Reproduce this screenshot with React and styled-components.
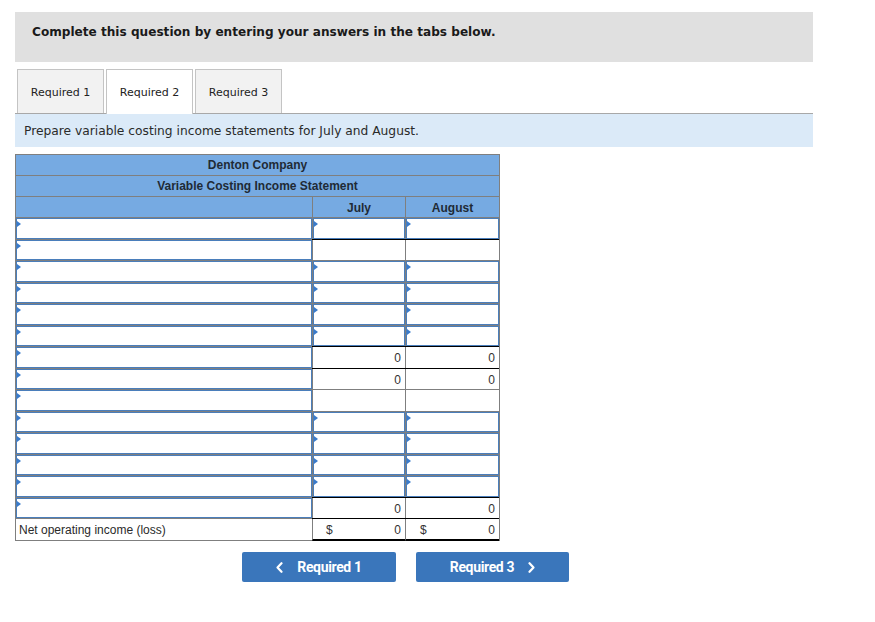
import React from "react";
import styled, { createGlobalStyle, css } from "styled-components";

const Global = createGlobalStyle`
  html, body { margin: 0; padding: 0; background: #fff; }
  * { box-sizing: border-box; }
`;

const Page = styled.div`
  padding: 12px 0 0 15px;
  width: 813px;
  font-family: "DejaVu Sans", Verdana, sans-serif;
  color: #222;
`;

const Instruction = styled.div`
  height: 50px;
  background: #e0e0e0;
  padding: 12px 17px;
  font-size: 12.1px;
  line-height: 17px;
  font-weight: bold;
  color: #1a1a1a;
`;

const TabBar = styled.div`
  display: flex;
  gap: 2px;
  margin-top: 7px;
  padding-left: 2px;
  border-bottom: 1px solid #a8a8a8;
  width: 798px;
`;

const Tab = styled.div`
  width: 87px;
  display: flex;
  align-items: center;
  justify-content: center;
  padding-top: 1px;
  font-size: 11px;
  color: #222;
  border: 1px solid #c4c4c4;
  border-bottom: none;
  background: ${(p) => (p.$active ? "#fff" : "#f2f2f2")};
  margin-bottom: ${(p) => (p.$active ? "-1px" : "0")};
  height: ${(p) => (p.$active ? "45px" : "44px")};
`;

const InfoBand = styled.div`
  width: 798px;
  height: 33px;
  background: #dbeaf8;
  padding-left: 9px;
  display: flex;
  align-items: center;
  font-size: 12.25px;
  color: #2a2a2a;
`;

const Sheet = styled.div`
  margin-top: 7px;
  width: 485px;
  border: 1px solid #7f7f7f;
  border-bottom: none;
  font-family: "Liberation Sans", Arial, sans-serif;
  font-size: 12px;
`;

const TitleRow = styled.div`
  height: 21px;
  background: #76aae2;
  border-bottom: 1px solid #7f7f7f;
  display: flex;
  align-items: center;
  justify-content: center;
  font-weight: bold;
  color: #1f2a36;
`;

const Row = styled.div`
  display: flex;
  height: ${(p) => p.$h}px;
`;

const colWidth = { label: 296, july: 93, aug: 94 };

const Cell = styled.div`
  position: relative;
  width: ${(p) => colWidth[p.$col]}px;
  height: 100%;
  border-bottom: 1px solid #7f7f7f;
  ${(p) => p.$col !== "label" && css`border-left: 1px solid #7f7f7f;`}
  background: ${(p) => (p.$head ? "#76aae2" : "#fff")};
  display: flex;
  align-items: center;
  ${(p) =>
    p.$topRule &&
    css`
      &::before {
        content: "";
        position: absolute;
        left: -1px;
        right: 0;
        top: -1px;
        height: 1px;
        background: #000;
      }
    `}
  ${(p) =>
    p.$total &&
    css`
      border-bottom: 2px solid #000;
    `}
`;

const HeadText = styled.span`
  flex: 1;
  text-align: center;
  padding-top: 1px;
  font-weight: bold;
  color: #1f2a36;
`;

const InputWrap = styled.div`
  position: relative;
  width: 100%;
  height: 100%;
  &::before {
    content: "";
    position: absolute;
    left: 1px;
    top: 3px;
    width: 0;
    height: 0;
    border-top: 3px solid transparent;
    border-bottom: 3px solid transparent;
    border-left: 4px solid #3a7bcb;
  }
`;

const Field = styled.input`
  display: block;
  width: 100%;
  height: 100%;
  margin: 0;
  padding: 0 4px;
  border: 1px solid #4a7ebb;
  background: #fff;
  font: inherit;
  outline: none;
`;

const Amount = styled.span`
  flex: 1;
  display: flex;
  justify-content: space-between;
  padding: 1px 4px 0 ${(p) => (p.$col === "aug" ? "14px" : "13px")};
  color: #333;
`;

const Label = styled.span`
  padding: 1px 0 0 3px;
  color: #2a2a2a;
`;

const Nav = styled.div`
  display: flex;
  gap: 20px;
  margin-top: 11px;
  padding-left: 227px;
`;

const NavButton = styled.button`
  width: ${(p) => p.$w}px;
  height: 30px;
  border: none;
  border-radius: 2px;
  background: #3a76bb;
  color: #fff;
  font-family: Roboto, "Liberation Sans", sans-serif;
  font-weight: bold;
  font-size: 14px;
  letter-spacing: -0.35px;
  display: flex;
  align-items: center;
  justify-content: center;
  gap: 14px;
  padding: 0;
  cursor: pointer;
`;

const Chevron = ({ dir }) => (
  <svg width="7" height="11" viewBox="0 0 7 11" aria-hidden="true">
    <path
      d={dir === "left" ? "M5.5 1.2 L1.5 5.5 L5.5 9.8" : "M1.5 1.2 L5.5 5.5 L1.5 9.8"}
      fill="none"
      stroke="#fff"
      strokeWidth="2.2"
      strokeLinecap="round"
      strokeLinejoin="round"
    />
  </svg>
);

const Input = () => (
  <InputWrap>
    <Field type="text" />
  </InputWrap>
);

// row kinds: "in" = all inputs, "blank" = value cells empty, "zero" = zeros, "net" = totals
const rows = [
  { kind: "in" },
  { kind: "blank", rule: true },
  { kind: "in" },
  { kind: "in" },
  { kind: "in" },
  { kind: "in" },
  { kind: "zero", rule: true },
  { kind: "zero", rule: true },
  { kind: "blank" },
  { kind: "in" },
  { kind: "in" },
  { kind: "in" },
  { kind: "in" },
  { kind: "zero", rule: true },
  { kind: "net", rule: true },
];

const ValueCell = ({ col, row }) => {
  const { kind, rule } = row;
  return (
    <Cell $col={col} $topRule={rule} $total={kind === "net"}>
      {kind === "in" && <Input />}
      {kind === "zero" && (
        <Amount $col={col}>
          <span />
          <span>0</span>
        </Amount>
      )}
      {kind === "net" && (
        <Amount $col={col}>
          <span>$</span>
          <span>0</span>
        </Amount>
      )}
    </Cell>
  );
};

export default function App() {
  return (
    <>
      <Global />
      <Page>
        <Instruction>Complete this question by entering your answers in the tabs below.</Instruction>
        <TabBar>
          <Tab>Required 1</Tab>
          <Tab $active>Required 2</Tab>
          <Tab>Required 3</Tab>
        </TabBar>
        <InfoBand>Prepare variable costing income statements for July and August.</InfoBand>
        <Sheet>
          <TitleRow>Denton Company</TitleRow>
          <TitleRow>Variable Costing Income Statement</TitleRow>
          <Row $h={21}>
            <Cell $col="label" $head />
            <Cell $col="july" $head>
              <HeadText>July</HeadText>
            </Cell>
            <Cell $col="aug" $head>
              <HeadText>August</HeadText>
            </Cell>
          </Row>
          {rows.map((row, i) => (
            <Row key={i} $h={i % 2 === 0 ? 22 : 21}>
              <Cell $col="label">
                {row.kind === "net" ? <Label>Net operating income (loss)</Label> : <Input />}
              </Cell>
              <ValueCell col="july" row={row} />
              <ValueCell col="aug" row={row} />
            </Row>
          ))}
        </Sheet>
        <Nav>
          <NavButton $w={154}>
            <Chevron dir="left" />
            <span>Required 1</span>
          </NavButton>
          <NavButton $w={153}>
            <span>Required 3</span>
            <Chevron dir="right" />
          </NavButton>
        </Nav>
      </Page>
    </>
  );
}
